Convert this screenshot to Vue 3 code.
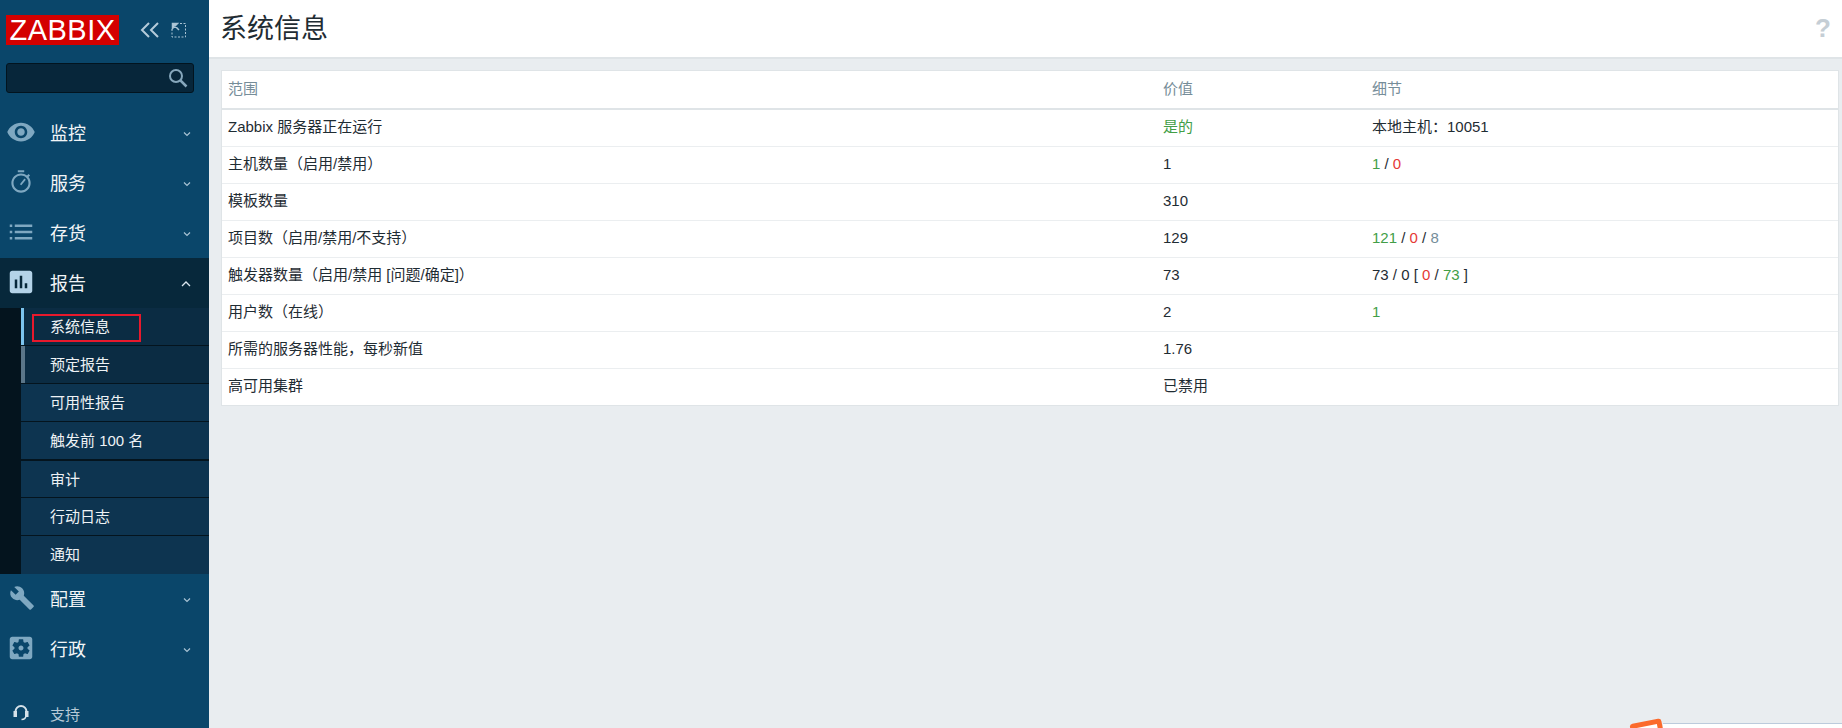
<script setup>
const iconPaths = {
  eye: { vb: '0 0 24 24', d: 'M12 4.5C7 4.5 2.73 7.61 1 12c1.73 4.39 6 7.5 11 7.5s9.27-3.11 11-7.5c-1.73-4.39-6-7.5-11-7.5zM12 17c-2.76 0-5-2.24-5-5s2.24-5 5-5 5 2.24 5 5-2.24 5-5 5zm0-8c-1.66 0-3 1.34-3 3s1.34 3 3 3 3-1.34 3-3-1.34-3-3-3z' },
  timer: { vb: '-2 -2 28 28', d: 'M15 1H9v2h6V1zM11 14l4.2-5.2 1.3 1L12.3 15zM19.03 7.39l1.42-1.42c-.43-.51-.9-.99-1.41-1.41l-1.42 1.42C16.07 4.74 14.12 4 12 4c-4.97 0-9 4.03-9 9s4.02 9 9 9 9-4.03 9-9c0-2.12-.74-4.07-1.97-5.61zM12 20c-3.87 0-7-3.13-7-7s3.13-7 7-7 7 3.13 7 7-3.13 7-7 7z' },
  list: { vb: '0 0 24 24', d: 'M3 13h2v-2H3v2zm0 5h2v-2H3v2zm0-10h2V6H3v2zm4 5h14v-2H7v2zm0 5h14v-2H7v2zM7 6v2h14V6H7z' },
  chart: { vb: '0 0 24 24', d: 'M19 3H5c-1.1 0-2 .9-2 2v14c0 1.1.9 2 2 2h14c1.1 0 2-.9 2-2V5c0-1.1-.9-2-2-2zM9 17H7v-7h2v7zm4 0h-2V7h2v10zm4 0h-2v-4h2v4z' },
  wrench: { vb: '0 0 28 28', d: 'M25.7 21l-9.1-9.1c.9-2.3.4-5-1.5-6.9-2-2-5-2.4-7.4-1.3L12 8 9 11 4.600 6.700C3.400 9.100 3.900 12.100 5.900 14.100c1.900 1.900 4.600 2.400 6.900 1.500l9.100 9.100c.4.4 1 .4 1.400 0l2.300-2.300c.5-.4.5-1.100.1-1.400z' },
  gear: { vb: '0 0 24 24', d: 'M12 10c-1.1 0-2 .9-2 2s.9 2 2 2 2-.9 2-2-.9-2-2-2zm7-7H5c-1.11 0-2 .9-2 2v14c0 1.1.89 2 2 2h14c1.11 0 2-.9 2-2V5c0-1.1-.89-2-2-2zm-1.75 9c0 .23-.02.46-.05.68l1.48 1.16c.13.11.17.3.08.45l-1.4 2.42c-.09.15-.27.21-.43.15l-1.74-.7c-.36.28-.76.51-1.18.69l-.26 1.85c-.03.17-.18.3-.35.3h-2.8c-.17 0-.32-.13-.35-.29l-.26-1.85c-.43-.18-.82-.41-1.18-.69l-1.74.7c-.16.06-.34 0-.43-.15l-1.4-2.42c-.09-.15-.05-.34.08-.45l1.48-1.16c-.03-.23-.05-.46-.05-.69 0-.23.02-.46.05-.68l-1.48-1.16c-.13-.11-.17-.3-.08-.45l1.4-2.42c.09-.15.27-.21.43-.15l1.74.7c.36-.28.76-.51 1.18-.69l.26-1.85c.03-.17.18-.3.35-.3h2.8c.17 0 .32.13.35.29l.26 1.85c.43.18.82.41 1.18.69l1.74-.7c.16-.06.34 0 .43.15l1.4 2.42c.09.15.05.34-.08.45l-1.48 1.16c.03.23.05.46.05.69z' }
}
const topMenu = [
  { label: '监控', icon: 'eye' },
  { label: '服务', icon: 'timer' },
  { label: '存货', icon: 'list' }
]
const bottomMenu = [
  { label: '配置', icon: 'wrench' },
  { label: '行政', icon: 'gear' }
]
const subMenu = [
  { label: '系统信息', cls: 'sel' },
  { label: '预定报告', cls: 'hov' },
  { label: '可用性报告', cls: '' },
  { label: '触发前 100 名', cls: 'thick' },
  { label: '审计', cls: 'short' },
  { label: '行动日志', cls: '' },
  { label: '通知', cls: '' }
]
</script>

<template>
  <div class="page">
    <aside class="side">
      <div class="brand">
        <div class="logo">ZABBIX</div>
        <svg class="ctl" width="20" height="18" viewBox="0 0 20 18" fill="none" stroke="#b5cbda" stroke-width="2">
          <path d="M9 2 2 9l7 7M18 2l-7 7 7 7" />
        </svg>
        <svg class="ctl ctl2" width="16" height="16" viewBox="0 0 16 16" fill="none" stroke="#a9c3d4">
          <path d="M9 1.500h5.500V15H1V7" stroke-dasharray="2 1.500" />
          <path d="M1.500 1.500h5L1.500 6.500zM3 3l5 5" fill="#b5cbda" stroke-width="1.500" />
        </svg>
      </div>
      <div class="search">
        <svg width="20" height="20" viewBox="0 0 20 20" fill="none" stroke="#86a7bc" stroke-width="2">
          <circle cx="8" cy="8" r="6" />
          <path d="m12.500 12.500 6 6" stroke-width="2.500" />
        </svg>
      </div>
      <nav class="menu">
        <div v-for="m in topMenu" :key="m.label" class="item">
          <svg class="ico" width="30" height="30" :viewBox="iconPaths[m.icon].vb"><path :d="iconPaths[m.icon].d" fill-rule="evenodd" /></svg>
          <span class="lab">{{ m.label }}</span>
          <svg class="chev" width="8" height="6" viewBox="0 0 8 6" fill="none" stroke="#a9c3d4" stroke-width="1.200"><path d="m1 1.500 3 3 3-3" /></svg>
        </div>
        <div class="item active">
          <svg class="ico" width="30" height="30" :viewBox="iconPaths.chart.vb"><path :d="iconPaths.chart.d" fill-rule="evenodd" /></svg>
          <span class="lab">报告</span>
          <svg class="chev" width="10" height="6" viewBox="0 0 10 6" fill="none" stroke="#dbe6ee" stroke-width="1.300"><path d="m1 5 4-4 4 4" /></svg>
        </div>
        <div class="subwrap">
          <ul class="sub">
            <li v-for="s in subMenu" :key="s.label" :class="s.cls">{{ s.label }}</li>
          </ul>
          <div class="redbox"></div>
        </div>
        <div v-for="m in bottomMenu" :key="m.label" class="item">
          <svg class="ico" width="30" height="30" :viewBox="iconPaths[m.icon].vb"><path :d="iconPaths[m.icon].d" fill-rule="evenodd" /></svg>
          <span class="lab">{{ m.label }}</span>
          <svg class="chev" width="8" height="6" viewBox="0 0 8 6" fill="none" stroke="#a9c3d4" stroke-width="1.200"><path d="m1 1.500 3 3 3-3" /></svg>
        </div>
      </nav>
      <div class="support">
        <svg width="16" height="18" viewBox="0 0 16 18" fill="none" stroke="#d5e1e9" stroke-width="2">
          <path d="M2.500 11V7.500a5.500 5.500 0 0 1 11 0V11" />
          <path d="M13 11c0 3-2 4.500-4.500 4.500" stroke-width="1.500" />
          <rect x="1.500" y="8" width="1.500" height="4" />
          <rect x="13" y="8" width="1.500" height="4" />
        </svg>
        <span>支持</span>
      </div>
    </aside>

    <main class="main">
      <header class="head">
        <h1>系统信息</h1>
        <span class="help">?</span>
      </header>
      <section class="content">
        <table class="tbl">
          <colgroup>
            <col class="c1" />
            <col class="c2" />
            <col />
          </colgroup>
          <thead>
            <tr><th>范围</th><th>价值</th><th>细节</th></tr>
          </thead>
          <tbody>
            <tr>
              <td>Zabbix 服务器正在运行</td>
              <td class="green">是的</td>
              <td>本地主机：10051</td>
            </tr>
            <tr>
              <td>主机数量（启用/禁用）</td>
              <td>1</td>
              <td><span class="green">1</span> / <span class="red">0</span></td>
            </tr>
            <tr><td>模板数量</td><td>310</td><td></td></tr>
            <tr>
              <td>项目数（启用/禁用/不支持）</td>
              <td>129</td>
              <td><span class="green">121</span> / <span class="red">0</span> / <span class="grey">8</span></td>
            </tr>
            <tr>
              <td>触发器数量（启用/禁用 [问题/确定]）</td>
              <td>73</td>
              <td>73 / 0 [ <span class="red">0</span> / <span class="green">73</span> ]</td>
            </tr>
            <tr><td>用户数（在线）</td><td>2</td><td><span class="green">1</span></td></tr>
            <tr><td>所需的服务器性能，每秒新值</td><td>1.76</td><td></td></tr>
            <tr><td>高可用集群</td><td>已禁用</td><td></td></tr>
          </tbody>
        </table>
      </section>
    </main>

    <div class="widget">
      <div class="panel"></div>
      <div class="tag"></div>
    </div>
  </div>
</template>

<style>
html, body { margin: 0; padding: 0; overflow: hidden; }
</style>

<style scoped>
.page {
  position: relative;
  display: flex;
  height: 728px;
  overflow: hidden;
  font-family: "Liberation Sans", "Noto Sans CJK SC", sans-serif;
  font-size: 15px;
  color: #1f2c33;
  background: #e9edf0;
}
.side {
  width: 209px;
  flex: none;
  background: #0a466a;
  display: flex;
  flex-direction: column;
  color: #f2f5f7;
}
.side > * { flex: none; }
.brand {
  display: flex;
  align-items: center;
  padding: 15px 0 0 6px;
  height: 30px;
}
.logo {
  width: 113px;
  height: 30px;
  background: #d40000;
  color: #fff;
  font-size: 29px;
  line-height: 31px;
  text-align: center;
  letter-spacing: 0.5px;
}
.ctl { margin-left: 21px; }
.ctl2 { margin-left: 11px; }
.search {
  margin: 18px 15px 0 6px;
  height: 28px;
  background: #07263a;
  border: 1px solid #02141f;
  border-radius: 3px;
  display: flex;
  align-items: center;
  justify-content: flex-end;
  padding-right: 5px;
}
.menu { margin-top: 15px; display: flex; flex-direction: column; }
.item {
  box-sizing: border-box;
  height: 50px;
  flex: none;
  display: flex;
  align-items: center;
  padding: 0 0 2px 6px;
  position: relative;
}
.ico { fill: #7fa8c1; flex: none; }
.lab { margin-left: 14px; font-size: 18px; flex: 1; }
.chev { margin: 4px 18px 0 0; }
.item.active { background: #07283b; }
.item.active .ico { fill: #b4d3e8; }
.subwrap {
  position: relative;
  flex: none;
  padding-left: 21px;
  background: #04141e;
}
.sub { list-style: none; margin: 0; padding: 0; }
.sub li {
  height: 37px;
  line-height: 38px;
  padding-left: 29px;
  background: #0d3450;
  border-bottom: 1px solid #04141e;
  font-size: 15px;
  color: #eef2f5;
}
.sub li:last-child { border-bottom: 0; height: 38px; }
.sub li.thick { border-bottom-width: 2px; }
.sub li.short { height: 36px; }
.sub li.sel { background: #0b2c43; box-shadow: inset 3px 0 0 #7cc4ee; }
.sub li.hov { background: #0b2c43; box-shadow: inset 4px 0 0 #5b7689; }
.redbox {
  position: absolute;
  left: 32px;
  top: 6px;
  width: 105px;
  height: 24px;
  border: 2px solid #e8192c;
}
.support {
  margin-top: 24px;
  display: flex;
  align-items: center;
  padding-left: 13px;
  height: 30px;
  color: #b6c9d6;
  font-size: 15px;
}
.support span { margin-left: 21px; }
.main { flex: 1; min-width: 0; display: flex; flex-direction: column; }
.head {
  height: 57px;
  padding: 0 11px;
  background: #fff;
  border-bottom: 2px solid #dfe4e7;
  display: flex;
  align-items: center;
  justify-content: space-between;
}
.head h1 { margin: 0; font-size: 27px; font-weight: 400; line-height: 36px; color: #1f2c33; }
.help { font-size: 26px; font-weight: 700; color: #c5ced5; }
.content { padding: 12px 4px 0 13px; }
.tbl {
  width: 100%;
  table-layout: fixed;
  border-collapse: collapse;
  background: #fff;
  outline: 1px solid #dfe4e7;
  line-height: 18px;
}
.c1 { width: 935px; }
.c2 { width: 209px; }
.tbl th {
  height: 35px;
  padding: 0 6px 2px;
  font-weight: 400;
  text-align: left;
  color: #768d99;
  border-bottom: 2px solid #dfe4e7;
}
.tbl td {
  height: 33px;
  padding: 0 6px 3px;
  border-bottom: 1px solid #ebeef0;
}
.tbl tr:last-child td { border-bottom: 0; }
.green { color: #429e47; }
.red { color: #e53935; }
.grey { color: #768d99; }
.widget {
  position: absolute;
  left: 1630px;
  top: 718px;
  right: 0;
  height: 30px;
}
.tag {
  position: absolute;
  left: 2px;
  top: 3px;
  box-sizing: border-box;
  width: 32px;
  height: 30px;
  border: 5px solid #fb6a2c;
  border-radius: 3px;
  background: #fff;
  transform: rotate(-11deg);
}
.panel {
  position: absolute;
  left: 33px;
  right: 0;
  top: 5px;
  height: 30px;
  background: #fff;
  border-top: 1px solid #bccbdc;
}
</style>
